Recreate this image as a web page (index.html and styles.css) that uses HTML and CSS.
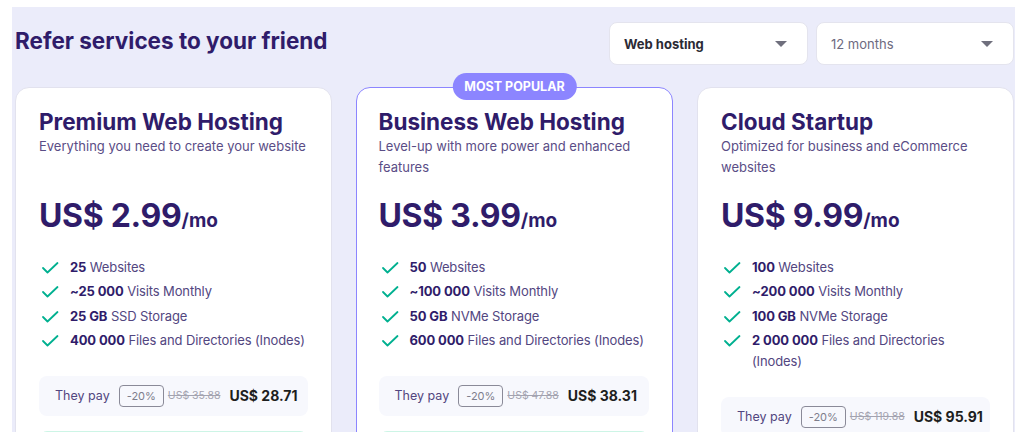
FILE: index.html
```html
<!DOCTYPE html>
<html lang="en">
<head>
<meta charset="utf-8">
<title>Refer services</title>
<link rel="stylesheet" href="styles.css">
</head>
<body>
<div class="panel">
  <div class="header">
    <h1 class="title">Refer services to your friend</h1>
    <div class="selects">
      <div class="select select-strong"><span>Web hosting</span><svg class="caret" viewBox="0 0 12 6" width="12" height="6"><path d="M0 0h12L6 6z"/></svg></div>
      <div class="select"><span>12 months</span><svg class="caret" viewBox="0 0 12 6" width="12" height="6"><path d="M0 0h12L6 6z"/></svg></div>
    </div>
  </div>
  <div class="cards">
    <div class="card">
      <h2 class="card-title">Premium Web Hosting</h2>
      <p class="card-desc">Everything you need to create your website</p>
      <div class="price">US$ 2.99<span class="per">/mo</span></div>
      <ul class="features">
        <li><svg class="check" viewBox="0 0 20 14" width="20" height="14"><path d="M4 7l4.5 4.5L18.5 2"/></svg><span><b>25</b> Websites</span></li>
        <li><svg class="check" viewBox="0 0 20 14" width="20" height="14"><path d="M4 7l4.5 4.5L18.5 2"/></svg><span><b>~25 000</b> Visits Monthly</span></li>
        <li><svg class="check" viewBox="0 0 20 14" width="20" height="14"><path d="M4 7l4.5 4.5L18.5 2"/></svg><span><b>25 GB</b> SSD Storage</span></li>
        <li><svg class="check" viewBox="0 0 20 14" width="20" height="14"><path d="M4 7l4.5 4.5L18.5 2"/></svg><span><b>400 000</b> Files and Directories (Inodes)</span></li>
      </ul>
      <div class="pay">
        <span class="pay-label">They pay</span>
        <span class="discount">-20%</span>
        <s class="old">US$ 35.88</s>
        <span class="new">US$ 28.71</span>
      </div>
      <div class="cta"></div>
    </div>
    <div class="card card-popular">
      <span class="badge">MOST POPULAR</span>
      <h2 class="card-title">Business Web Hosting</h2>
      <p class="card-desc">Level-up with more power and enhanced features</p>
      <div class="price">US$ 3.99<span class="per">/mo</span></div>
      <ul class="features">
        <li><svg class="check" viewBox="0 0 20 14" width="20" height="14"><path d="M4 7l4.5 4.5L18.5 2"/></svg><span><b>50</b> Websites</span></li>
        <li><svg class="check" viewBox="0 0 20 14" width="20" height="14"><path d="M4 7l4.5 4.5L18.5 2"/></svg><span><b>~100 000</b> Visits Monthly</span></li>
        <li><svg class="check" viewBox="0 0 20 14" width="20" height="14"><path d="M4 7l4.5 4.5L18.5 2"/></svg><span><b>50 GB</b> NVMe Storage</span></li>
        <li><svg class="check" viewBox="0 0 20 14" width="20" height="14"><path d="M4 7l4.5 4.5L18.5 2"/></svg><span><b>600 000</b> Files and Directories (Inodes)</span></li>
      </ul>
      <div class="pay">
        <span class="pay-label">They pay</span>
        <span class="discount">-20%</span>
        <s class="old">US$ 47.88</s>
        <span class="new">US$ 38.31</span>
      </div>
      <div class="cta"></div>
    </div>
    <div class="card">
      <h2 class="card-title">Cloud Startup</h2>
      <p class="card-desc">Optimized for business and eCommerce websites</p>
      <div class="price">US$ 9.99<span class="per">/mo</span></div>
      <ul class="features">
        <li><svg class="check" viewBox="0 0 20 14" width="20" height="14"><path d="M4 7l4.5 4.5L18.5 2"/></svg><span><b>100</b> Websites</span></li>
        <li><svg class="check" viewBox="0 0 20 14" width="20" height="14"><path d="M4 7l4.5 4.5L18.5 2"/></svg><span><b>~200 000</b> Visits Monthly</span></li>
        <li><svg class="check" viewBox="0 0 20 14" width="20" height="14"><path d="M4 7l4.5 4.5L18.5 2"/></svg><span><b>100 GB</b> NVMe Storage</span></li>
        <li><svg class="check" viewBox="0 0 20 14" width="20" height="14"><path d="M4 7l4.5 4.5L18.5 2"/></svg><span><b>2 000 000</b> Files and Directories <span class="nl">(Inodes)</span></span></li>
      </ul>
      <div class="pay">
        <span class="pay-label">They pay</span>
        <span class="discount">-20%</span>
        <s class="old">US$ 119.88</s>
        <span class="new">US$ 95.91</span>
      </div>
      <div class="cta"></div>
    </div>
  </div>
</div>
</body>
</html>
```

FILE: styles.css
```css
* { box-sizing: border-box; }
html, body { margin: 0; padding: 0; background: #ffffff; }
body { font-family: "Inter", "Liberation Sans", sans-serif; color: #2f1c6a; }

.panel {
  margin: 7px 9px 0 12px;
  height: 425px;
  overflow: hidden;
  background: #ebecfa;
  padding: 15px 1px 0 3px;
}

.header {
  display: flex;
  align-items: center;
  justify-content: space-between;
  height: 43px;
}
.title {
  margin: 0;
  font-size: 22.5px;
  font-weight: 700;
  color: #2f1c6a;
  position: relative;
  top: -3px;
}
.selects { display: flex; gap: 8px; }
.select {
  width: 198px;
  height: 43px;
  background: #fff;
  border: 1px solid #e4e4ee;
  border-radius: 8px;
  display: flex;
  align-items: center;
  justify-content: space-between;
  padding: 0 20px 0 14px;
  font-size: 13px;
  color: #6d6a80;
}
.select-strong { color: #2b2a35; font-weight: 700; width: 199px; }
.caret { fill: #6f6f7d; }

.cards {
  margin-top: 22px;
  display: grid;
  grid-template-columns: repeat(3, 317px);
  column-gap: 24px;
  align-items: start;
}
.card {
  position: relative;
  background: #fff;
  border: 1px solid #e2e2ee;
  border-radius: 14px;
  padding: 20px 23px 0 23px;
  min-height: 380px;
}
.card-popular { border: 1.5px solid #8c85ff; padding-left: 21.5px; }
.badge {
  position: absolute;
  top: -15px;
  left: 50%;
  transform: translateX(-50%);
  background: #8c85ff;
  color: #fff;
  font-size: 12.5px;
  font-weight: 700;
  line-height: 27px;
  height: 27px;
  padding: 0 12px;
  border-radius: 14px;
  white-space: nowrap;
}
.card-title {
  margin: 0;
  font-size: 22.5px;
  line-height: 28px;
  font-weight: 700;
  color: #2f1c6a;
}
.card-desc {
  margin: 0;
  font-size: 13px;
  line-height: 21px;
  min-height: 42px;
  color: #5a4d86;
}
.price {
  margin-top: 18px;
  font-size: 32px;
  line-height: 40px;
  font-weight: 700;
  color: #2f1c6a;
  letter-spacing: -0.3px;
}
.per { font-size: 19px; font-weight: 700; letter-spacing: 0; }

.features {
  list-style: none;
  margin: 16px 0 0 0;
  padding: 0;
  display: flex;
  flex-direction: column;
  gap: 3.3px;
}
.features li {
  display: flex;
  align-items: flex-start;
  gap: 11px;
  font-size: 13px;
  line-height: 21px;
  letter-spacing: -0.12px;
  color: #52467f;
  white-space: nowrap;
}
.features li > span { display: block; }
.features .nl { display: block; }
.features b { color: #2f1c6a; font-weight: 700; }
.check {
  flex: none;
  margin-top: 4px;
  fill: none;
  stroke: #00b090;
  stroke-width: 1.8;
  stroke-linecap: round;
  stroke-linejoin: round;
}

.pay {
  margin-top: 25px;
  height: 40px;
  background: #f7f8fd;
  border-radius: 8px;
  display: flex;
  align-items: center;
  padding: 0 16px;
  white-space: nowrap;
}
.pay-label { font-size: 12.5px; color: #52467f; margin-right: 9px; }
.discount {
  font-size: 11px;
  color: #7d7d8c;
  border: 1px solid #8a8a98;
  border-radius: 4px;
  height: 22px;
  line-height: 20px;
  padding: 0 7px;
  margin-right: 4px;
}
.old { font-size: 10.5px; color: #a3a3b0; margin-right: 9px; }
.new { font-size: 14px; font-weight: 700; color: #1d1e20; }

.cta {
  margin-top: 15px;
  height: 44px;
  border: 1px solid #cdf5e6;
  border-radius: 8px;
  background: #fff;
}
```
